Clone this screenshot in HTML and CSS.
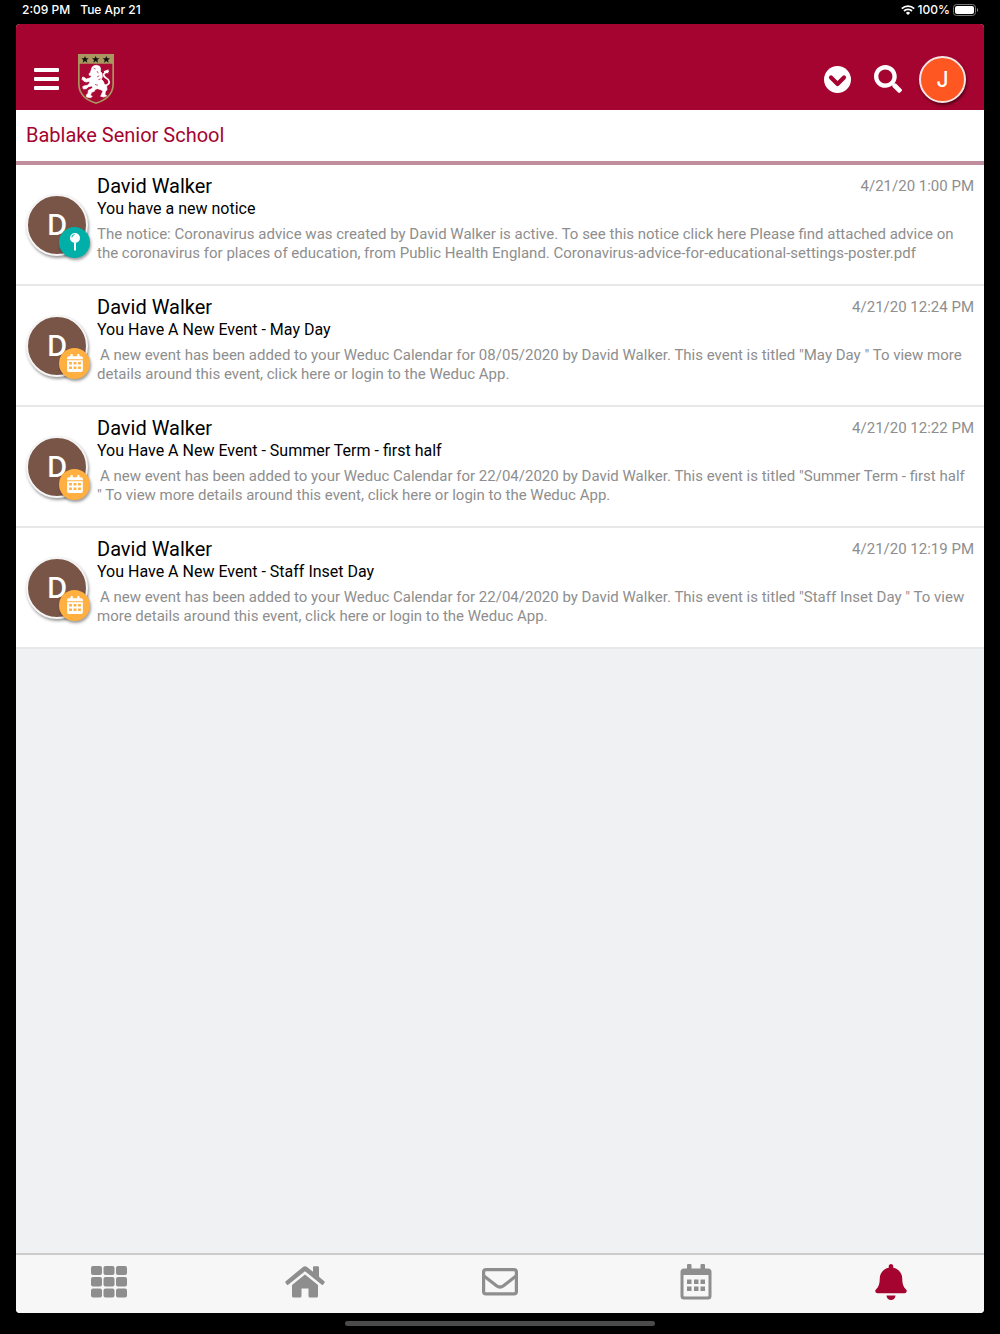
FILE: index.html
```
<!DOCTYPE html>
<html lang="en">
  <head>
    <meta charset="utf-8">
    <meta name="viewport" content="width=device-width, initial-scale=1">
    <title>Notifications</title>
    <link rel="stylesheet" href="styles.css">
  </head>

  <body>
    <!-- shared icons -->
    <svg class="defs" aria-hidden="true">
      <symbol id="calendar" viewBox="0 0 448 512">
        <path fill-rule="evenodd" d="M0 464c0 26.5 21.5 48 48 48h352c26.5 0 48-21.5 48-48V176H0zM312 224h80v72h-80zM312 352h80v72h-80zM184 224h80v72h-80zM184 352h80v72h-80zM56 224h80v72H56zM56 352h80v72H56zM400 64h-48V16c0-8.8-7.2-16-16-16h-32c-8.8 0-16 7.2-16 16v48H160V16c0-8.8-7.2-16-16-16h-32c-8.8 0-16 7.2-16 16v48H48C21.5 64 0 85.5 0 112v40h448v-40c0-26.5-21.5-48-48-48z"/>
      </symbol>
      <symbol id="pin" viewBox="0 0 10 18">
        <path fill-rule="evenodd" d="M5 0a5 5 0 1 1 0 10A5 5 0 0 1 5 0zM4.800 1.300C3 1.300 1.600 2.500 1.400 4.400l.9.1C2.500 3.200 3.500 2.200 4.800 2.100z"/>
        <path d="M4 10h2v7l-1 1-1-1z"/>
      </symbol>
    </svg>

    <div class="status-bar">
      <span>2:09 PM</span>
      <span>Tue Apr 21</span>
      <span class="battery">
        <svg width="14" height="10" viewBox="0 0 14 10" aria-hidden="true">
          <g fill="none" stroke="#fff" stroke-width="1.800">
            <path d="M.8 3.600a8.800 8.800 0 0 1 12.400 0"/>
            <path d="M3 6a5.700 5.700 0 0 1 8 0"/>
          </g>
          <path fill="#fff" d="M7 10 4.900 7.900a3 3 0 0 1 4.200 0z"/>
        </svg>
        <span>100%</span>
        <svg width="25" height="12" viewBox="0 0 25 12" aria-hidden="true">
          <rect x=".5" y=".5" width="22" height="11" rx="3" fill="none" stroke="#777"/>
          <rect x="2" y="2" width="19" height="8" rx="2" fill="#fff"/>
          <path fill="#888" d="M24 4c1.500.5 1.500 3.500 0 4z"/>
        </svg>
      </span>
    </div>

    <div class="app">
      <header class="header">
        <button class="icon-button menu" aria-label="Menu">
          <svg width="25" height="22" viewBox="0 0 25 22">
            <rect width="25" height="4" rx="1"/>
            <rect y="9" width="25" height="4" rx="1"/>
            <rect y="18" width="25" height="4" rx="1"/>
          </svg>
        </button>
        <svg class="crest" width="36" height="50" viewBox="0 0 108 150" role="img" aria-label="School crest">
          <path fill="#aa9760" d="M0 0h108v90c0 34-26 52-54 60C26 142 0 124 0 90z"/>
          <path fill="#a90a35" d="M5 29h98v61c0 30-23 47-49 55C28 137 5 120 5 90z"/>
          <path fill="#111" d="m21 6 3 7h8l-6 5 2 8-7-5-7 5 2-8-6-5h8zM53 6l3 7h8l-6 5 2 8-7-5-7 5 2-8-6-5h8zM85 6l3 7h8l-6 5 2 8-7-5-7 5 2-8-6-5h8z"/>
          <path fill="#fff" stroke="#fff" stroke-width="2" stroke-linejoin="round" d="m42 40 6-5 8-1 9 3 3 8-1 7 5 6 1 11-3 7 6 6 3 9 7 5 1 11-5 6-1 8 5 5-9 3-9-2 3-7 4-9-7-4-9-3-7 2-3 6-8 3-4 9 6 3-5 4-12-2-1-6 5-5 1-9 8-4 5-4-2-5-10 2-7 6-9 1-2-7 6-3 8-1 7-7-1-5-9 2-7-2-6-6 2-7 6 2 5 4 8-2 6-3 1-5-6-1-1-5 4-3z"/>
          <path fill="none" stroke="#fff" stroke-width="5" d="M76 93c13 4 21-6 16-14-4-7-17-9-15-18 1-5 8-7 15-10"/>
          <path fill="#fff" d="m77 52 15-6-3 5 5-1-5 5 4 3-13-1z"/>
          <path stroke="#a90a35" stroke-width="2" d="m47 43 6 2M57 51l4 7M57 69l7-4M61 77l7-2M51 91l9 3"/>
        </svg>

        <button class="icon-button expand" aria-label="Show more">
          <svg width="27" height="27" viewBox="0 0 27 27">
            <circle cx="13.500" cy="13.500" r="13.500"/>
            <path fill="none" stroke="#a50430" stroke-width="4.200" stroke-linecap="round" stroke-linejoin="round" d="m7 11.500 6.500 6.500 6.500-6.500"/>
          </svg>
        </button>
        <button class="icon-button search" aria-label="Search">
          <svg width="28" height="28" viewBox="0 0 512 512">
            <path d="M505 442.700 405.300 343c-4.500-4.500-10.600-7-17-7H372c27.600-35.300 44-79.700 44-128C416 93.100 322.900 0 208 0S0 93.100 0 208s93.100 208 208 208c48.300 0 92.700-16.400 128-44v16.300c0 6.400 2.500 12.500 7 17l99.700 99.700c9.400 9.400 24.600 9.400 33.900 0l28.300-28.300c9.400-9.400 9.400-24.600.1-34zM208 336c-70.700 0-128-57.200-128-128 0-70.700 57.200-128 128-128 70.700 0 128 57.200 128 128 0 70.700-57.200 128-128 128z"/>
          </svg>
        </button>
        <button class="profile" aria-label="Profile J">J</button>
      </header>

      <h1 class="school">Bablake Senior School</h1>

      <main class="notifications">
        <article class="item">
          <div class="avatar">D
            <span class="badge notice"><svg width="10" height="18"><use href="#pin"/></svg></span>
          </div>
          <div class="content">
            <div class="top">
              <h2>David Walker</h2>
              <time>4/21/20 1:00 PM</time>
            </div>
            <h3>You have a new notice</h3>
            <p>The notice: Coronavirus advice was created by David Walker is active. To see this notice click here Please find attached advice on the coronavirus for places of education, from Public Health England. Coronavirus-advice-for-educational-settings-poster.pdf</p>
          </div>
        </article>

        <article class="item">
          <div class="avatar">D
            <span class="badge event"><svg width="16" height="18"><use href="#calendar"/></svg></span>
          </div>
          <div class="content">
            <div class="top">
              <h2>David Walker</h2>
              <time>4/21/20 12:24 PM</time>
            </div>
            <h3>You Have A New Event - May Day</h3>
            <p class="indent">A new event has been added to your Weduc Calendar for 08/05/2020 by David Walker. This event is titled "May Day " To view more details around this event, click here or login to the Weduc App.</p>
          </div>
        </article>

        <article class="item">
          <div class="avatar">D
            <span class="badge event"><svg width="16" height="18"><use href="#calendar"/></svg></span>
          </div>
          <div class="content">
            <div class="top">
              <h2>David Walker</h2>
              <time>4/21/20 12:22 PM</time>
            </div>
            <h3>You Have A New Event - Summer Term - first half</h3>
            <p class="indent">A new event has been added to your Weduc Calendar for 22/04/2020 by David Walker. This event is titled "Summer Term - first half " To view more details around this event, click here or login to the Weduc App.</p>
          </div>
        </article>

        <article class="item">
          <div class="avatar">D
            <span class="badge event"><svg width="16" height="18"><use href="#calendar"/></svg></span>
          </div>
          <div class="content">
            <div class="top">
              <h2>David Walker</h2>
              <time>4/21/20 12:19 PM</time>
            </div>
            <h3>You Have A New Event - Staff Inset Day</h3>
            <p class="indent">A new event has been added to your Weduc Calendar for 22/04/2020 by David Walker. This event is titled "Staff Inset Day " To view more details around this event, click here or login to the Weduc App.</p>
          </div>
        </article>
      </main>

      <nav class="tabs">
        <button aria-label="Apps">
          <svg width="36" height="32" viewBox="0 0 36 32">
            <rect width="11" height="9" rx="2"/>
            <rect x="12.500" width="11" height="9" rx="2"/>
            <rect x="25" width="11" height="9" rx="2"/>
            <rect y="11" width="11" height="9.500" rx="2"/>
            <rect x="12.500" y="11" width="11" height="9.500" rx="2"/>
            <rect x="25" y="11" width="11" height="9.500" rx="2"/>
            <rect y="22.500" width="11" height="9" rx="2"/>
            <rect x="12.500" y="22.500" width="11" height="9" rx="2"/>
            <rect x="25" y="22.500" width="11" height="9" rx="2"/>
          </svg>
        </button>
        <button aria-label="Home">
          <svg width="40" height="32" viewBox="0 0 40 32">
            <path d="M20 8.500 33 19v11q0 1.500-1.500 1.500H25q-1.500 0-1.500-1.500v-7.500h-7V30q0 1.500-1.500 1.500H8.500Q7 31.500 7 30V19z"/>
            <path d="M18 .9q2-1.400 4 0l6 4.900V1.500Q28 .3 29.200.3h3.600Q34 .3 34 1.500v9.300l5.300 4.400q.9.700.2 1.600l-1.300 1.600q-.8.900-1.700.2L20 5.300 3.500 18.600q-.9.700-1.700-.2L.5 16.800q-.7-.9.200-1.600z"/>
          </svg>
        </button>
        <button aria-label="Messages">
          <svg width="36" height="28" viewBox="0 0 36 28">
            <g fill="none" stroke="#8e8e8e" stroke-width="3.200">
              <rect x="1.600" y="1.600" width="32.800" height="24.300" rx="2.500"/>
              <path d="m2 8 12.500 9.700q3.500 2.600 7 0L34 8"/>
            </g>
          </svg>
        </button>
        <button aria-label="Calendar">
          <svg width="32" height="36" viewBox="0 0 32 36">
            <path fill-rule="evenodd" d="M4 4.500h3V1q0-1 1-1h2.500q1 0 1 1v3.500h9V1q0-1 1-1H24q1 0 1 1v3.500h3q3.500 0 3.500 3.500v24q0 3.500-3.500 3.500H4Q.5 35.500.5 32V8Q.5 4.500 4 4.500zM3.500 11v20.500q0 1 1 1h23q1 0 1-1V11z"/>
            <path d="M7 15.500h4.500V20H7zM14 15.500h4.500V20H14zM20.500 15.500H25V20h-4.500zM7 22.500h4.500V27H7zM14 22.500h4.500V27H14zM20.500 22.500H25V27h-4.500z"/>
          </svg>
        </button>
        <button class="active" aria-label="Notifications">
          <svg width="32" height="36" viewBox="0 0 448 512">
            <path d="M224 512c35.300 0 64-28.600 64-64H160c0 35.400 28.600 64 64 64z"/>
            <path d="M439 362c-19-21-55-52-55-154 0-78-54-140-128-155V32c0-18-14-32-32-32s-32 14-32 32v21C118 68 64 130 64 208c0 102-36 133-55 154-6 6-9 14-9 22 0 16 13 32 32 32h384c19 0 32-16 32-32 0-8-3-16-9-22z"/>
          </svg>
        </button>
      </nav>
    </div>

    <div class="home-bar"></div>
  </body>
</html>
```

FILE: styles.css
```
* {
  box-sizing: border-box;
}

body {
  display: flex;
  flex-direction: column;
  min-height: 100vh;
  margin: 0;
  padding: 0 16px;
  background: #000;
  font-family: Roboto, sans-serif;
}

h1, h2, h3, p {
  margin: 0;
  font-weight: 400;
}

button {
  padding: 0;
  border: 0;
  background: none;
  cursor: pointer;
}

svg {
  display: block;
}

.defs {
  display: none;
}

.status-bar {
  display: flex;
  gap: 10px;
  align-items: center;
  height: 24px;
  padding: 0 6px 5px;
  color: #fff;
  font-family: Inter, sans-serif;
  font-size: 12px;
  font-weight: 500;
}

.battery {
  display: flex;
  align-items: center;
  gap: 3px;
  margin-left: auto;
}

.app {
  display: flex;
  flex: 1;
  flex-direction: column;
  overflow: hidden;
  border-radius: 4px;
  background: #f0f1f3;
}

.header {
  display: flex;
  align-items: center;
  padding: 30px 18px 6px;
  background: #a50430;
}

.icon-button {
  fill: #fff;
}

.crest {
  margin-left: 19px;
}

.expand {
  margin-left: auto;
}

.search {
  margin: 0 17px 0 23px;
}

.profile {
  width: 47px;
  height: 47px;
  border: 2px solid #f5e5e5;
  border-radius: 50%;
  background: #ff5722;
  box-shadow: 1px 2px 3px rgba(0, 0, 0, 0.5);
  color: #fff;
  font-family: Inter, sans-serif;
  font-size: 21px;
  font-weight: 500;
}

.school {
  padding: 0 10px;
  border-bottom: 4px solid #bf8d9c;
  background: #fff;
  color: #a50430;
  font-size: 20px;
  line-height: 51px;
}

.notifications {
  flex: 1;
}

.item {
  display: flex;
  align-items: center;
  gap: 9px;
  min-height: 121px;
  padding: 0 10px;
  border-bottom: 2px solid #e8e8e8;
  background: #fff;
}

.avatar {
  position: relative;
  flex: none;
  width: 62px;
  height: 62px;
  border: 2px solid #f5f5f5;
  border-radius: 50%;
  background: #795548;
  box-shadow: 1px 2px 3px rgba(0, 0, 0, 0.4);
  color: #fff;
  font-family: "Open Sans", sans-serif;
  font-size: 28px;
  font-weight: 600;
  line-height: 56px;
  text-align: center;
}

.badge {
  position: absolute;
  right: -4px;
  bottom: -4px;
  display: flex;
  align-items: center;
  justify-content: center;
  width: 31px;
  height: 31px;
  border-radius: 50%;
  box-shadow: 1px 2px 3px rgba(0, 0, 0, 0.4);
  fill: #fff;
}

.notice {
  background: #00b0a8;
}

.event {
  background: #ffb041;
}

.content {
  flex: 1;
  align-self: stretch;
  padding: 9px 0;
}

.top {
  display: flex;
  justify-content: space-between;
  line-height: 24px;
}

h2 {
  color: #000;
  font-size: 20px;
}

time {
  color: #8e8e8e;
  font-size: 15px;
}

h3 {
  font-size: 16px;
  line-height: 21px;
}

p {
  margin-top: 6px;
  padding-right: 4px;
  color: #8e8e8e;
  font-size: 15px;
  line-height: 19px;
}

.indent {
  text-indent: 3px;
}

.tabs {
  display: flex;
  justify-content: space-between;
  padding: 0 63px 4px;
  border-top: 2px solid #ccc;
  background: #f7f7f7;
}

.tabs button {
  display: flex;
  align-items: center;
  justify-content: center;
  width: 60px;
  height: 54px;
  fill: #8e8e8e;
}

.tabs .active {
  fill: #a50430;
}

.home-bar {
  align-self: center;
  width: 32%;
  height: 5px;
  margin: 8px 0;
  border-radius: 3px;
  background: #4b4b4b;
}
```
